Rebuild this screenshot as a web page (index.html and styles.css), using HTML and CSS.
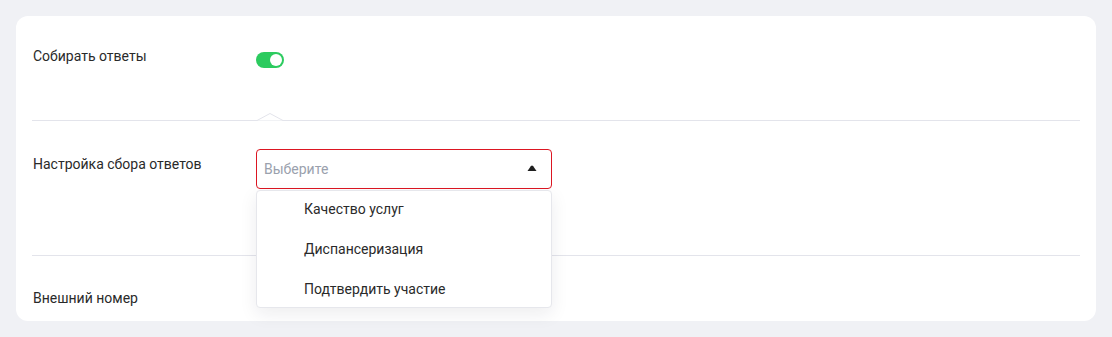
FILE: index.html
```html
<!DOCTYPE html>
<html lang="ru">
<head>
  <meta charset="UTF-8" />
  <title>Настройки</title>
  <link rel="stylesheet" href="styles.css">
</head>
<body>
  <div class="card">
    <!-- Collect answers -->
    <div class="row row-toggle">
      <div class="label">Собирать ответы</div>
      <div class="value">
        <span class="toggle on"><span class="knob"></span></span>
      </div>
    </div>
    <div class="divider">
      <svg class="notch" width="26" height="8" viewBox="0 0 26 8">
        <polyline points="0,7.5 13,0.5 26,7.5" fill="#fff" stroke="#e3e4eb" stroke-width="1"/>
      </svg>
    </div>
    <!-- Answer settings -->
    <div class="row row-select">
      <div class="label">Настройка сбора ответов</div>
      <div class="value">
        <div class="select open">
          <span class="placeholder">Выберите</span>
          <svg class="caret" width="10" height="6" viewBox="0 0 10 6">
            <path d="M0.5 6 L3.8 1.2 Q5 -0.4 6.2 1.2 L9.5 6 Z" fill="#1f1f1f"/>
          </svg>
        </div>
        <ul class="dropdown">
          <li>Качество услуг</li>
          <li>Диспансеризация</li>
          <li>Подтвердить участие</li>
        </ul>
      </div>
    </div>
    <div class="divider"></div>
    <!-- External number -->
    <div class="row row-last">
      <div class="label">Внешний номер</div>
      <div class="value"></div>
    </div>
  </div>
</body>
</html>
```

FILE: styles.css
```css
body {
  margin: 0;
  padding: 16px;
  background: #f0f1f5;
  font-family: Roboto, "Noto Sans", sans-serif;
  font-size: 14px;
  line-height: 20px;
  color: #2a2a2a;
}
.card {
  background: #fff;
  border-radius: 12px;
  padding: 0 16px;
  height: 305px;
  box-sizing: border-box;
}
.row {
  display: flex;
  padding-left: 1px;
}
.label {
  width: 223px;
  flex-shrink: 0;
}
.value {
  position: relative;
  flex: 1;
}
.row-toggle {
  padding-top: 30px;
  height: 74px;
}
.row-select {
  position: relative;
  z-index: 2;
  padding-top: 28px;
  height: 106px;
}
.row-select .label {
  margin-top: 5px;
}
.row-last {
  padding-top: 32px;
}
.divider {
  position: relative;
  height: 1px;
  background: #e3e4eb;
}
.notch {
  position: absolute;
  left: 225px;
  top: -7px;
  display: block;
}
.toggle {
  display: inline-flex;
  align-items: center;
  width: 28px;
  height: 16px;
  margin-top: 6px;
  border-radius: 8px;
  background: #2ccb5f;
  box-sizing: border-box;
  padding: 0 2px;
  justify-content: flex-end;
}
.knob {
  width: 12px;
  height: 12px;
  border-radius: 50%;
  background: #fff;
}
.select {
  width: 296px;
  height: 40px;
  box-sizing: border-box;
  border: 1px solid #dc1622;
  border-radius: 4px;
  display: flex;
  align-items: center;
  justify-content: space-between;
  padding: 0 14px 0 7px;
}
.placeholder {
  color: #9aa1ad;
}
.caret {
  display: block;
  margin-top: -2px;
}
.dropdown {
  position: absolute;
  top: 41px;
  left: 0;
  z-index: 3;
  width: 296px;
  box-sizing: border-box;
  margin: 0;
  padding: 0;
  list-style: none;
  background: #fff;
  border: 1px solid #e6e7ec;
  border-radius: 4px;
  box-shadow: 0 6px 18px rgba(20, 25, 50, 0.08);
}
.dropdown li {
  height: 40px;
  line-height: 36px;
  padding-left: 47px;
}
.dropdown li:last-child {
  height: 36px;
}
```
